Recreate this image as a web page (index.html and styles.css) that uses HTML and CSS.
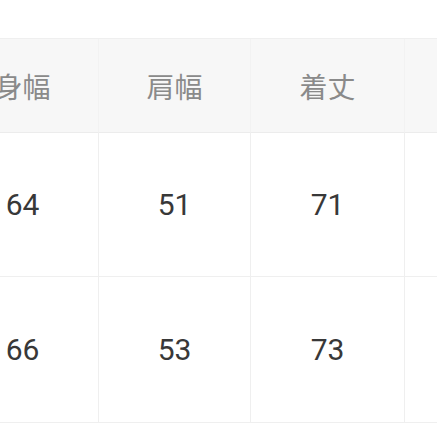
FILE: index.html
```html
<!DOCTYPE html>
<html lang="ja">
<head>
<meta charset="utf-8">
<link rel="stylesheet" href="styles.css">
</head>
<body>
<div class="table">
  <div class="cell head">身幅</div>
  <div class="cell head">肩幅</div>
  <div class="cell head">着丈</div>
  <div class="cell head"></div>
  <div class="cell num">64</div>
  <div class="cell num">51</div>
  <div class="cell num">71</div>
  <div class="cell num"></div>
  <div class="cell num">66</div>
  <div class="cell num">53</div>
  <div class="cell num">73</div>
  <div class="cell num"></div>
</div>
</body>
</html>
```
FILE: styles.css
```css
html, body {
  margin: 0;
  padding: 0;
  background: #ffffff;
  overflow: hidden;
  width: 437px;
  height: 437px;
}
.table {
  margin-top: 38px;
  margin-left: -53px;
  display: grid;
  grid-template-columns: 152px 152px 154px 152px;
  grid-template-rows: 94px 144px 146px;
  width: 610px;
  border-top: 1px solid #efefef;
}
.cell {
  display: flex;
  align-items: center;
  justify-content: center;
  border-right: 1.5px solid #efefef;
  border-bottom: 1.5px solid #efefef;
  box-sizing: border-box;
}
.head {
  background: #f7f7f7;
  color: #8a8a8a;
  font-family: "Noto Sans CJK JP", "Noto Sans", sans-serif;
  font-size: 28px;
  font-weight: 400;
  border-right-color: #f2f2f2;
  border-bottom-color: #ececec;
}
.num {
  color: #383838;
  font-family: Roboto, "Noto Sans", sans-serif;
  font-size: 30px;
}
```
